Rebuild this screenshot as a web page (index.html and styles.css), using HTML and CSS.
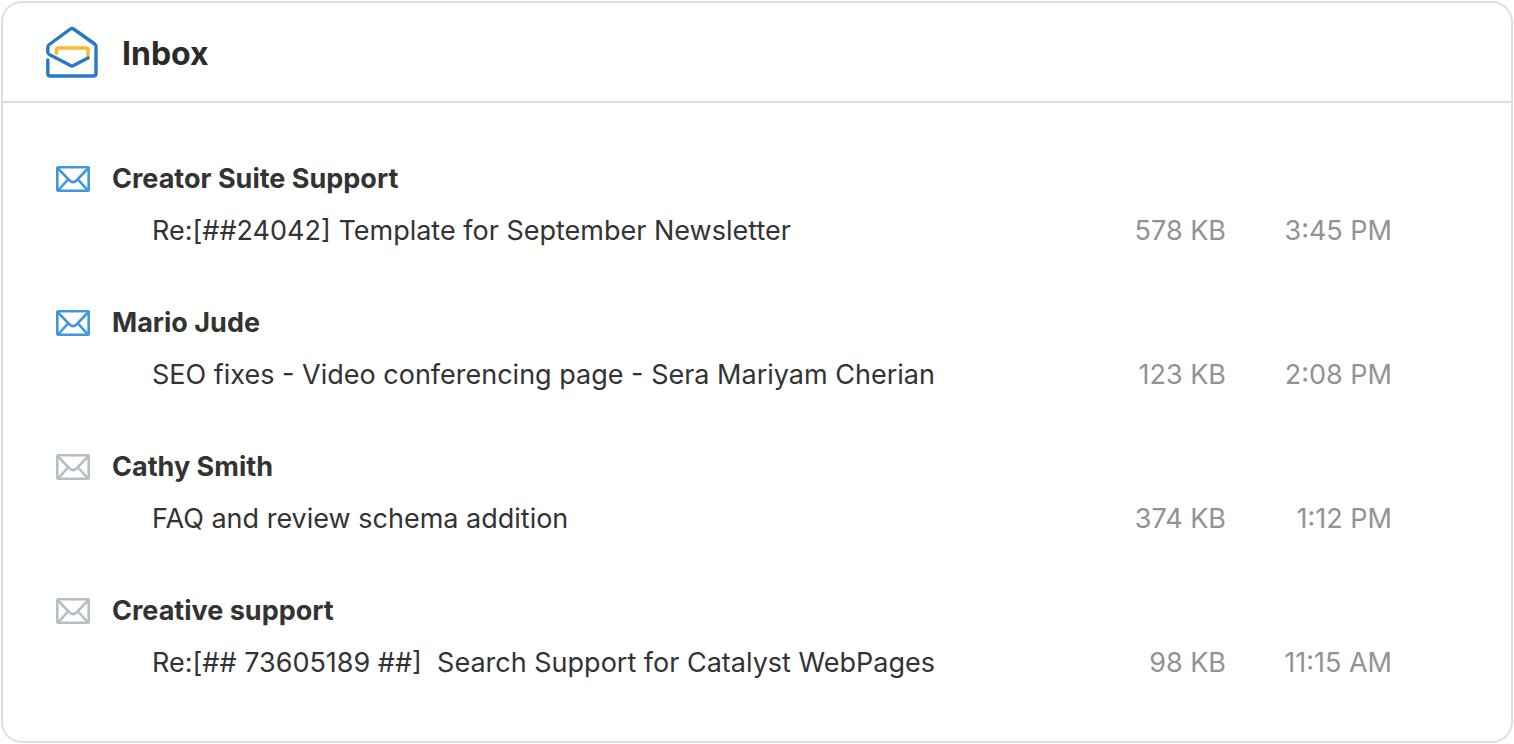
FILE: index.html
```html
<!DOCTYPE html>
<html lang="en">
<head>
<meta charset="utf-8">
<meta name="viewport" content="width=device-width, initial-scale=1">
<title>Inbox</title>
<link rel="stylesheet" href="styles.css">
</head>
<body>
<svg class="symbols" aria-hidden="true">
  <symbol id="envelope" viewBox="0 0 34 26">
    <rect x="1.300" y="1.300" width="31.400" height="23.400" rx="1"/>
    <path d="M1.500 2 13.500 14.300Q17 18 20.500 14.300L32.500 2M2 24.500 12 13.500M32 24.500 22 13.500"/>
  </symbol>
</svg>
<main class="inbox">
  <header class="inbox-header">
    <svg class="logo" viewBox="0 0 56 56" aria-hidden="true">
      <path class="logo-yellow" d="M12.500 29.500V26Q12.500 24 14.500 24H41.500Q44 24 44 26.500V34"/>
      <path class="logo-blue" d="M3.800 36V49.500Q3.800 52 6.300 52H49.500Q52 52 52 49.500V22.500Q52 21 50.700 20L29.600 5Q28 4 26.400 5L5.300 20.500Q3.800 21.700 3.800 23.500V28Q3.800 29.800 5.300 30.600L26.500 41.600Q28 42.400 29.500 41.600L44 34"/>
    </svg>
    <h1 class="title">Inbox</h1>
  </header>
  <ul class="messages">
    <li class="message unread">
      <svg class="envelope" aria-hidden="true"><use href="#envelope"/></svg>
      <h2 class="sender">Creator Suite Support</h2>
      <p class="subject">Re:[##24042] Template for September Newsletter</p>
      <span class="size">578 KB</span>
      <time class="time">3:45 PM</time>
    </li>
    <li class="message unread">
      <svg class="envelope" aria-hidden="true"><use href="#envelope"/></svg>
      <h2 class="sender">Mario Jude</h2>
      <p class="subject">SEO fixes - Video conferencing page - Sera Mariyam Cherian</p>
      <span class="size">123 KB</span>
      <time class="time">2:08 PM</time>
    </li>
    <li class="message">
      <svg class="envelope" aria-hidden="true"><use href="#envelope"/></svg>
      <h2 class="sender">Cathy Smith</h2>
      <p class="subject">FAQ and review schema addition</p>
      <span class="size">374 KB</span>
      <time class="time">1:12 PM</time>
    </li>
    <li class="message">
      <svg class="envelope" aria-hidden="true"><use href="#envelope"/></svg>
      <h2 class="sender">Creative support</h2>
      <p class="subject">Re:[## 73605189 ##]&nbsp; Search Support for Catalyst WebPages</p>
      <span class="size">98 KB</span>
      <time class="time">11:15 AM</time>
    </li>
  </ul>
</main>
</body>
</html>
```
FILE: styles.css
```css
* {
  box-sizing: border-box;
}

body {
  margin: 0;
  padding: 1px;
  background: #fff;
  color: #333;
  font-family: Inter, "Liberation Sans", sans-serif;
}

.symbols {
  position: absolute;
  width: 0;
  height: 0;
}

.inbox {
  border: 2px solid #dedede;
  border-radius: 21px;
  background: #fff;
}

.inbox-header {
  display: flex;
  align-items: center;
  gap: 22px;
  padding: 21px 41px;
  border-bottom: 2px solid #dedede;
}

.logo {
  width: 56px;
  height: 56px;
  fill: none;
  stroke-width: 3.400;
  stroke-linecap: round;
  stroke-linejoin: round;
}

.logo-blue {
  stroke: #2b79c2;
}

.logo-yellow {
  stroke: #fdb62f;
}

.title {
  margin: 0;
  padding-top: 3px;
  color: #2b2b2b;
  font-size: 32px;
  font-weight: 700;
  line-height: 40px;
}

.messages {
  display: flex;
  flex-direction: column;
  gap: 56px;
  margin: 0;
  padding: 58px 119px 60px 53px;
  list-style: none;
}

.message {
  display: grid;
  grid-template-columns: 34px 1fr auto 144px;
  align-items: center;
  column-gap: 22px;
  row-gap: 16px;
  font-size: 27px;
  line-height: 36px;
}

.envelope {
  width: 34px;
  height: 26px;
  fill: none;
  stroke: #b4bec3;
  stroke-width: 2.600;
  stroke-linecap: round;
}

.unread .envelope {
  stroke: #3d97d8;
}

.sender {
  grid-column: 2 / -1;
  margin: 0;
  font-size: 27px;
  font-weight: 700;
}

.subject {
  grid-column: 2;
  margin: 0;
  padding-left: 40px;
  font-weight: 400;
}

.size,
.time {
  color: #929292;
  text-align: right;
  white-space: nowrap;
}
```
